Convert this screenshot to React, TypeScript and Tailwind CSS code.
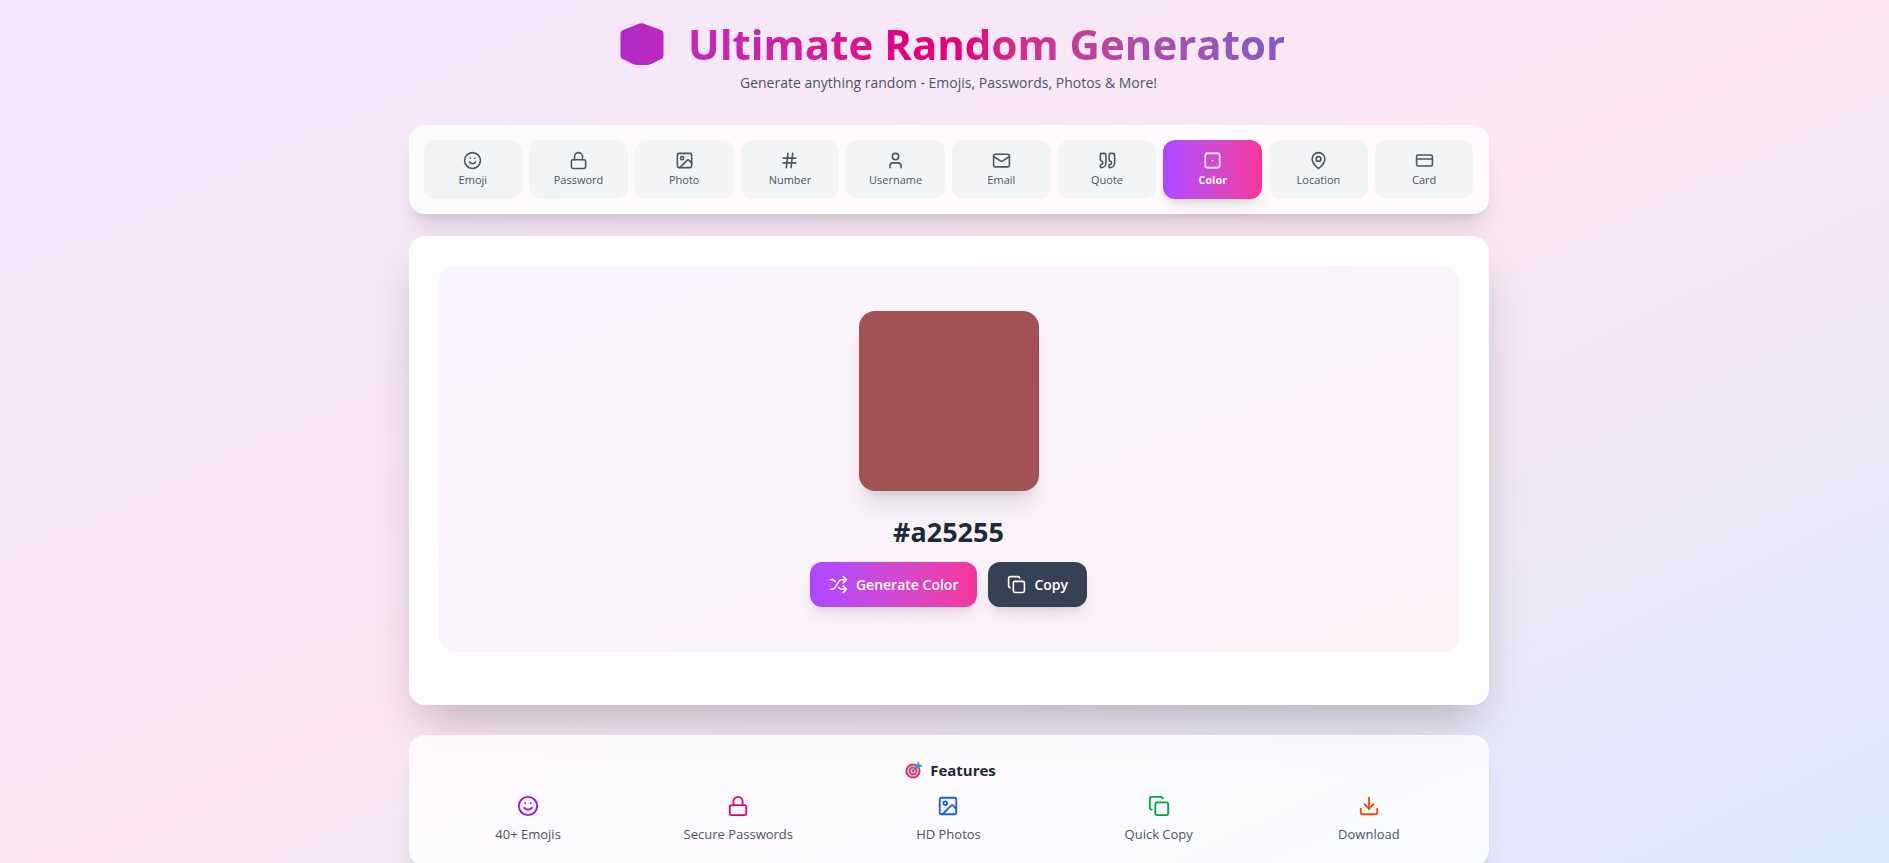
import { useState } from "react";
import {
  Smile, Lock, Image, Hash, User, Mail, Quote, MapPin, CreditCard, Shuffle, Copy, Download,
  type LucideIcon,
} from "lucide-react";

function ColorIcon({ className }: { className?: string }) {
  return (
    <svg viewBox="0 0 24 24" fill="none" stroke="currentColor" strokeWidth="2" strokeLinecap="round" strokeLinejoin="round" className={className} aria-hidden="true">
      <rect x="3" y="3" width="18" height="18" rx="2" />
      <path d="M12 12h.01" />
    </svg>
  );
}

const tabs: { label: string; Icon: LucideIcon | typeof ColorIcon }[] = [
  { label: "Emoji", Icon: Smile },
  { label: "Password", Icon: Lock },
  { label: "Photo", Icon: Image },
  { label: "Number", Icon: Hash },
  { label: "Username", Icon: User },
  { label: "Email", Icon: Mail },
  { label: "Quote", Icon: Quote },
  { label: "Color", Icon: ColorIcon },
  { label: "Location", Icon: MapPin },
  { label: "Card", Icon: CreditCard },
];

const features: { label: string; Icon: LucideIcon; color: string }[] = [
  { label: "40+ Emojis", Icon: Smile, color: "text-purple-600" },
  { label: "Secure Passwords", Icon: Lock, color: "text-pink-600" },
  { label: "HD Photos", Icon: Image, color: "text-blue-600" },
  { label: "Quick Copy", Icon: Copy, color: "text-green-600" },
  { label: "Download", Icon: Download, color: "text-orange-600" },
];

function DieIcon() {
  return (
    <svg viewBox="0 0 44 42" className="h-[42px] w-11" aria-hidden="true">
      <defs>
        <linearGradient id="die" x1="0" x2="1" y1="0" y2="0">
          <stop offset="0" stopColor="#b12ac9" />
          <stop offset="1" stopColor="#bb28bd" />
        </linearGradient>
      </defs>
      <path fill="url(#die)" d="M19.500.6Q21.500-.2 23.500.6L41.500 7.200Q43.500 8 43.500 10.500V32.500Q43.500 35 41.500 36L31 41Q29 42 27 42H17Q15 42 13 41L2.500 36Q.5 35 .5 32.500V10.500Q.5 8 2.500 7.200Z" />
    </svg>
  );
}

function TargetIcon() {
  return (
    <svg viewBox="0 0 18 18" className="size-[18px]" aria-hidden="true">
      <circle cx="8" cy="10" r="7.6" fill="#e0396a" />
      <circle cx="8" cy="10" r="5.6" fill="#d9bccf" />
      <circle cx="8" cy="10" r="4.2" fill="#e0396a" />
      <circle cx="8" cy="10" r="2.500" fill="#e3cdda" />
      <circle cx="8" cy="10" r="1.2" fill="#c9305a" />
      <path d="M8 10 12.500 5.500" stroke="#3f7fb5" strokeWidth="1.2" />
      <path d="M10.4 7.600 10.600 4 12.400 2.600V1.400L14 .8 14.500 3.400 17.600 4.400 16.600 5.800 15.400 6 14.200 7.600Z" fill="#3fa6ea" />
      <path d="M11.500 6.500 15.500 3.200M12.200 3.400V5.800M15.400 5.400H12.800" stroke="#2b7cc4" strokeWidth=".6" />
    </svg>
  );
}

export default function App() {
  const [active, setActive] = useState("Color");
  const [color, setColor] = useState("#a25255");

  const generate = () =>
    setColor("#" + Math.floor(Math.random() * 0x1000000).toString(16).padStart(6, "0"));

  return (
    <div className="min-h-screen bg-linear-to-br from-purple-100 via-pink-100 to-blue-100 pb-[30px] pl-2 font-['Open_Sans','Noto_Sans',sans-serif] text-[14px]">
      <div className="mx-auto max-w-[1080px]">
        <header className="pt-[15px] pb-8 text-center">
          <h1 className="flex items-center justify-center gap-6 bg-linear-to-r from-purple-600 via-pink-600 to-blue-600 bg-clip-text pl-2 text-[42px] leading-[58px] font-bold text-transparent">
            <DieIcon />
            Ultimate Random Generator
          </h1>
          <p className="leading-5 text-gray-600">
            Generate anything random - Emojis, Passwords, Photos &amp; More!
          </p>
        </header>

        <nav className="mb-[22px] grid grid-cols-10 gap-[7px] rounded-2xl bg-white/80 p-[15px] shadow-xl">
          {tabs.map(({ label, Icon }) => (
            <button
              key={label}
              type="button"
              onClick={() => setActive(label)}
              className={
                active === label
                  ? "flex flex-col items-center gap-0.5 rounded-xl bg-linear-to-r from-purple-500 to-pink-500 pt-[11px] pb-3 text-[11px] leading-[15px] font-bold text-white shadow-lg"
                  : "flex flex-col items-center gap-0.5 rounded-xl bg-gray-100 pt-[11px] pb-3 text-[11px] leading-[15px] font-medium text-gray-600"
              }
            >
              <Icon className="size-[19px]" />
              {label}
            </button>
          ))}
        </nav>

        <main className="mb-[30px] rounded-2xl bg-white/90 px-[30px] pt-[30px] pb-[53px] shadow-2xl">
          <section className="flex flex-col items-center rounded-2xl bg-linear-to-br from-purple-50 to-pink-50 p-[45px]">
            <div className="mb-6 size-[180px] rounded-2xl shadow-xl" style={{ backgroundColor: color }} />
            <output className="mb-[13px] font-['Noto_Sans','Open_Sans',sans-serif] text-[27px] leading-[34px] font-bold text-gray-800">
              {color}
            </output>
            <div className="flex gap-[11px]">
              <button type="button" onClick={generate} className="flex h-[45px] items-center gap-2 rounded-xl bg-linear-to-r from-purple-500 to-pink-500 px-[19px] font-semibold text-white shadow-lg">
                <Shuffle className="size-[19px]" />
                Generate Color
              </button>
              <button type="button" onClick={() => navigator.clipboard?.writeText(color)} className="flex h-[45px] items-center gap-2 rounded-xl bg-gray-700 px-[19px] font-semibold text-white shadow-lg">
                <Copy className="size-[19px]" />
                Copy
              </button>
            </div>
          </section>
        </main>

        <section className="rounded-2xl bg-white/80 p-[22px] shadow-xl">
          <h2 className="mb-3 flex items-center justify-center gap-[7px] pl-1 text-[15px] leading-[26px] font-bold text-gray-800">
            <TargetIcon />
            Features
          </h2>
          <ul className="grid grid-cols-5 gap-[15px]">
            {features.map(({ label, Icon, color: tone }) => (
              <li key={label} className="flex flex-col items-center gap-2 text-[13px] leading-[19px] font-medium text-gray-600">
                <Icon className={`size-[22px] ${tone}`} />
                {label}
              </li>
            ))}
          </ul>
        </section>
      </div>
    </div>
  );
}
